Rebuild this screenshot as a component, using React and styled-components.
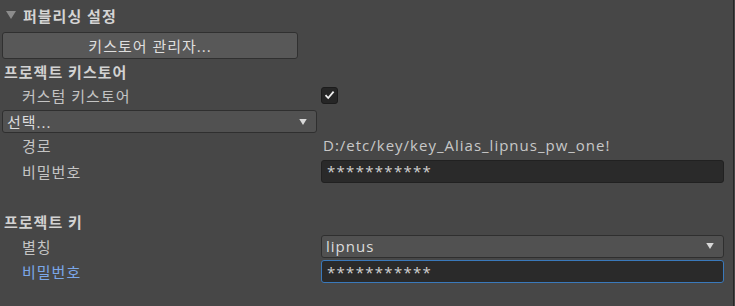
import React from 'react';
import styled, { createGlobalStyle } from 'styled-components';

const FONT = `"Open Sans", "Noto Sans CJK KR", sans-serif`;

const GlobalStyle = createGlobalStyle`
  html, body {
    margin: 0;
    padding: 0;
    background: #474747;
  }
`;

const Page = styled.div`
  width: 735px;
  height: 306px;
  background: #474747;
  font-family: ${FONT};
  font-size: 15px;
  letter-spacing: 1px;
  color: #c6c6c6;
  display: flex;
  box-sizing: border-box;
  overflow: hidden;
`;

const Content = styled.div`
  flex: 1;
  display: flex;
  flex-direction: column;
  padding-right: 9px;
`;

const Divider = styled.div`
  width: 1px;
  background: #262626;
  margin-right: 1px;
`;

const Header = styled.div`
  height: 30px;
  display: flex;
  align-items: center;
  gap: 7px;
  padding-left: 6px;
  font-weight: 700;
  color: #d4d4d4;
`;

const Button = styled.div`
  margin: 2px 426px 0 2px;
  height: 25px;
  background: #585858;
  border: 1px solid #303030;
  border-radius: 3px;
  display: flex;
  align-items: center;
  justify-content: center;
  color: #dedede;
`;

const SectionLabel = styled.div`
  height: 24px;
  display: flex;
  align-items: center;
  padding-left: 4px;
  font-weight: 700;
  color: #d2d2d2;
  margin-top: ${p => p.top || 0}px;
`;

const Row = styled.div`
  display: grid;
  grid-template-columns: 321px 1fr;
  align-items: center;
  height: ${p => p.h || 24}px;
`;

const Label = styled.div`
  padding-left: 22px;
  color: ${p => (p.active ? '#7ba7e8' : '#c4c4c4')};
`;

const Value = styled.div`
  padding-left: 2px;
  color: #c8c8c8;
`;

const Checkbox = styled.div`
  width: 15px;
  height: 15px;
  background: #262626;
  border: 1px solid #1c1c1c;
  border-radius: 3px;
  display: flex;
  align-items: center;
  justify-content: center;
`;

const Select = styled.div`
  height: 21px;
  background: #515151;
  border: 1px solid #2f2f2f;
  border-radius: 3px;
  display: flex;
  align-items: center;
  justify-content: space-between;
  padding: 0 8px 0 4px;
  color: #dcdcdc;
  margin: ${p => p.margin || 0};
`;

const Field = styled.div`
  height: 21px;
  background: #2a2a2a;
  border: 1px solid ${p => (p.focused ? '#3a79bb' : '#212121')};
  border-radius: 3px;
  display: flex;
  align-items: center;
  padding-left: 5px;
  color: #d0d0d0;
  letter-spacing: 1.3px;
  font-size: 15px;
`;

const Triangle = ({ color = '#8c8c8c', w = 10, h = 8 }) => (
  <svg width={w} height={h} viewBox="0 0 10 8">
    <polygon points="0,0 10,0 5,8" fill={color} />
  </svg>
);

const Check = () => (
  <svg width="11" height="10" viewBox="0 0 11 10">
    <path d="M1.5 5.2 L4.2 8 L9.6 1.6" stroke="#f0f0f0" strokeWidth="1.8" fill="none" />
  </svg>
);

export default function App() {
  return (
    <Page>
      <GlobalStyle />
      <Content>
        <Header>
          <Triangle />
          퍼블리싱 설정
        </Header>
        <Button>키스토어 관리자...</Button>
        <SectionLabel>프로젝트 키스토어</SectionLabel>
        <Row>
          <Label>커스텀 키스토어</Label>
          <Checkbox><Check /></Checkbox>
        </Row>
        <Select margin="3px 407px 0 2px">
          선택...
          <Triangle color="#d8d8d8" w={10} h={6} />
        </Select>
        <Row>
          <Label>경로</Label>
          <Value>D:/etc/key/key_Alias_lipnus_pw_one!</Value>
        </Row>
        <Row h={28}>
          <Label>비밀번호</Label>
          <Field>***********</Field>
        </Row>
        <SectionLabel top={24}>프로젝트 키</SectionLabel>
        <Row h={26}>
          <Label>별칭</Label>
          <Select>
            lipnus
            <Triangle color="#d8d8d8" w={10} h={6} />
          </Select>
        </Row>
        <Row h={25}>
          <Label active>비밀번호</Label>
          <Field focused>***********</Field>
        </Row>
      </Content>
      <Divider />
    </Page>
  );
}
